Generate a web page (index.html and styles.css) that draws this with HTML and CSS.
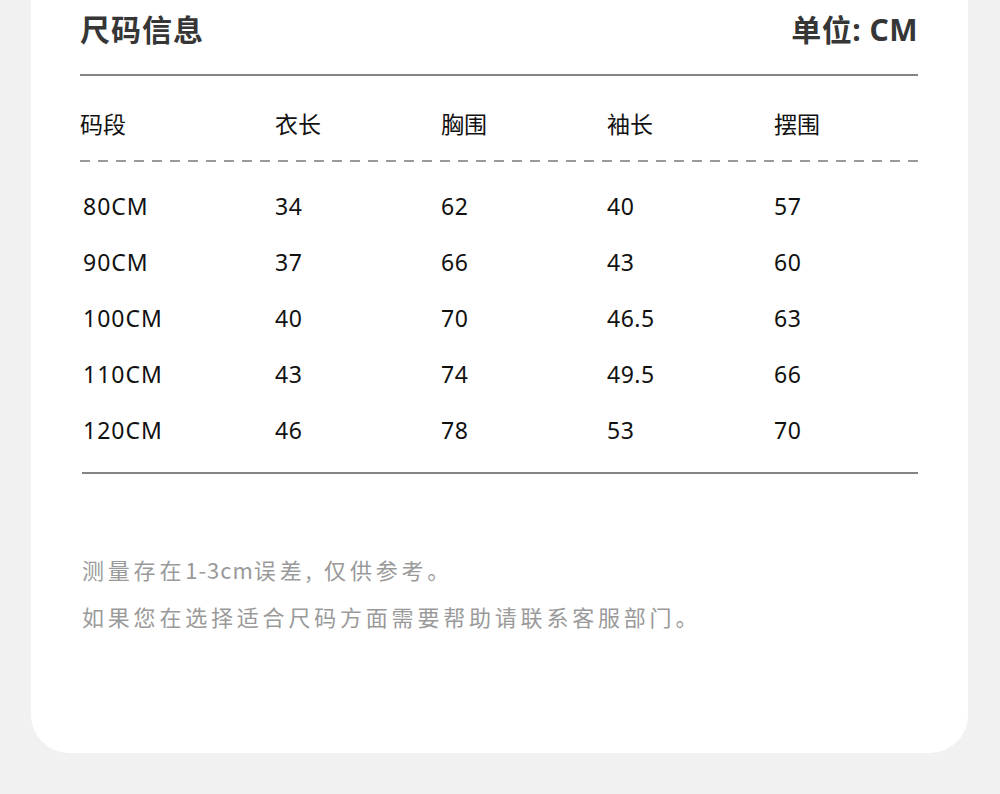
FILE: index.html
```html
<!DOCTYPE html>
<html lang="zh">
<head>
<meta charset="utf-8">
<title>尺码信息</title>
<link rel="stylesheet" href="styles.css">
</head>
<body>
<div class="card">
  <div class="head">
    <h1 class="title">尺码信息</h1>
    <div class="unit">单位: CM</div>
  </div>
  <div class="thead grid">
    <div>码段</div><div>衣长</div><div>胸围</div><div>袖长</div><div>摆围</div>
  </div>
  <div class="tbody">
    <div class="row grid"><div class="first">80CM</div><div>34</div><div>62</div><div>40</div><div>57</div></div>
    <div class="row grid"><div class="first">90CM</div><div>37</div><div>66</div><div>43</div><div>60</div></div>
    <div class="row grid"><div class="first">100CM</div><div>40</div><div>70</div><div>46.5</div><div>63</div></div>
    <div class="row grid"><div class="first">110CM</div><div>43</div><div>74</div><div>49.5</div><div>66</div></div>
    <div class="row grid"><div class="first">120CM</div><div>46</div><div>78</div><div>53</div><div>70</div></div>
  </div>
  <div class="notes">
    <p>测量存在<span class="latin">1-3cm</span>误差, 仅供参考。</p>
    <p>如果您在选择适合尺码方面需要帮助请联系客服部门。</p>
  </div>
</div>
</body>
</html>
```
FILE: styles.css
```css
html, body {
  margin: 0;
  padding: 0;
}
body {
  background: #f1f1f1;
  font-family: "Noto Sans", "Noto Sans CJK SC", sans-serif;
  height: 794px;
  overflow: hidden;
}
.card {
  box-sizing: border-box;
  width: 937px;
  height: 753px;
  margin-left: 31px;
  background: #fff;
  border-radius: 0 0 38px 38px;
  padding: 0 50px 0 49px;
}
.head {
  display: flex;
  justify-content: space-between;
  align-items: center;
  height: 56px;
  padding-bottom: 18px;
  border-bottom: 2px solid #858585;
  color: #363636;
}
.title {
  margin: 0;
  font-size: 30px;
  font-weight: 700;
  font-family: "Noto Sans CJK SC", sans-serif;
  letter-spacing: 1px;
}
.unit {
  font-size: 30px;
  font-weight: 700;
  letter-spacing: 0.5px;
  font-family: "Noto Sans", "Noto Sans CJK SC", sans-serif;
}
.grid {
  display: grid;
  grid-template-columns: 195px 166px 166px 167px 1fr;
  align-items: center;
}
.thead {
  padding: 34px 0 24px;
  line-height: 26px;
  font-size: 23px;
  color: #111;
  font-family: "Noto Sans CJK SC", sans-serif;
  position: relative;
}
.thead::after {
  content: "";
  position: absolute;
  left: 0;
  right: -2px;
  bottom: -2px;
  height: 2px;
  background: repeating-linear-gradient(to right, #9a9a9a 0 10px, transparent 10px 18px);
}
.tbody {
  margin-top: 2px;
  margin-left: 2px;
  padding: 16px 0 14px;
  border-bottom: 2px solid #858585;
}
.row {
  height: 56px;
  font-size: 23px;
  letter-spacing: 0.5px;
  color: #111;
  margin-left: -2px;
}
.row .first {
  padding-left: 3px;
  letter-spacing: 1px;
}
.notes {
  margin-top: 72px;
  padding-left: 2px;
  color: #9a9a9a;
  font-size: 22px;
  letter-spacing: 3.8px;
  font-family: "Noto Sans CJK SC", sans-serif;
}
.notes .latin {
  letter-spacing: 1px;
}
.notes p {
  margin: 0;
  line-height: 47px;
}
```
